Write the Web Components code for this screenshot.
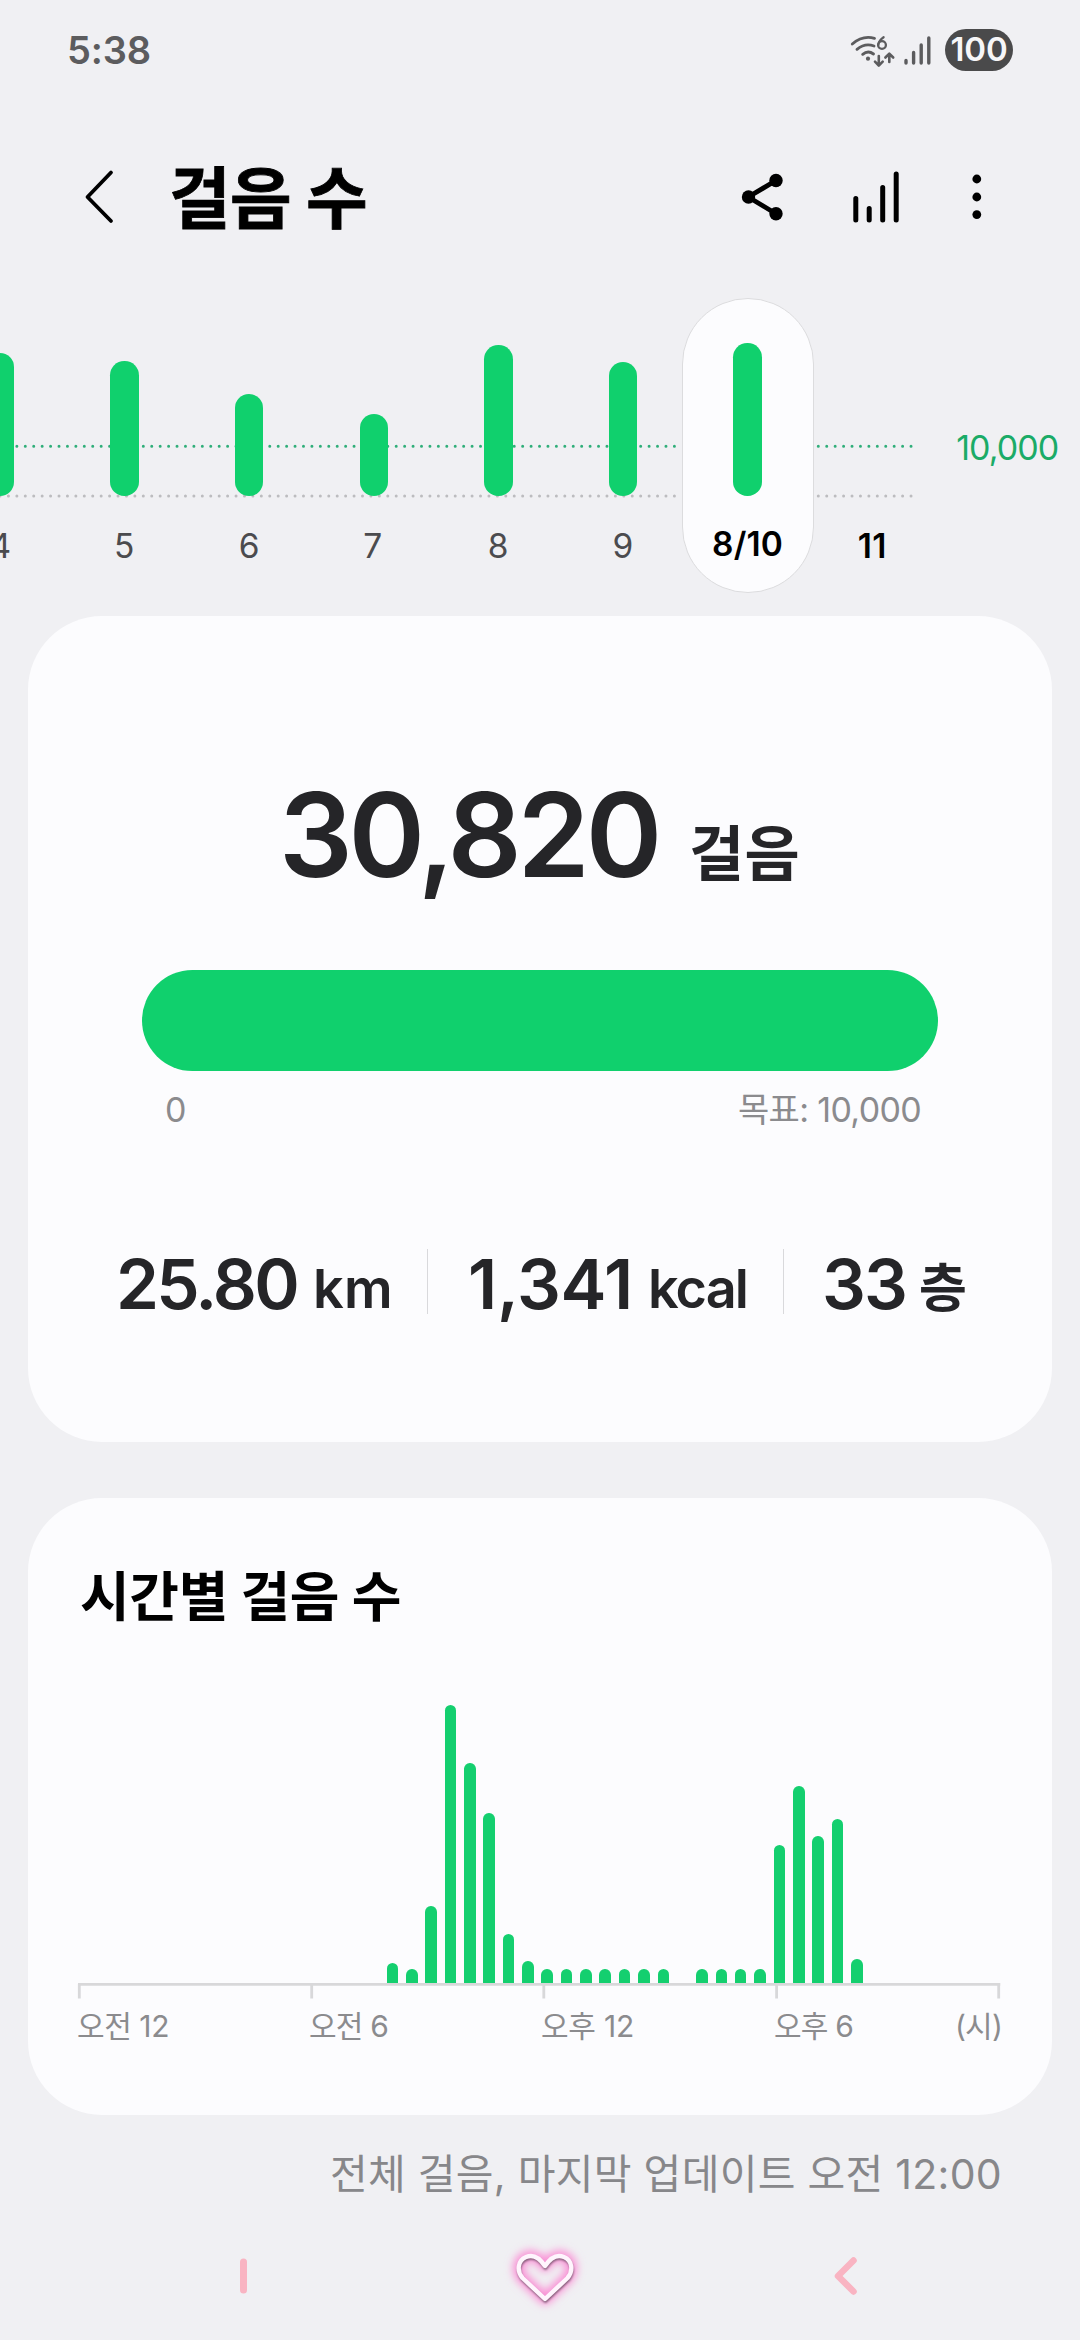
<!DOCTYPE html>
<html lang="ko">
<head>
<meta charset="utf-8">
<title>걸음 수</title>
<style>
html,body{margin:0;background:#f0f0f3}
body{width:1080px;height:2340px;overflow:hidden;font-family:Inter,"Noto Sans CJK KR",sans-serif}
</style>
</head>
<body>
<steps-app></steps-app>
<script>
const define = (name, html, setup) => customElements.define(name, class extends HTMLElement {
  connectedCallback() {
    if (this.shadowRoot) return;
    const root = this.attachShadow({ mode: 'open' });
    root.innerHTML = html;
    if (setup) setup(this, root);
  }
});

/* A line of text whose letter spacing is adjusted until it fills the width in "w". */
define('fit-text', `<style>
:host{display:block;flex:none;white-space:pre}
span{display:inline-block;white-space:pre}
</style><span><slot></slot></span>`, (el, root) => {
  const span = root.querySelector('span');
  const w = +el.getAttribute('w'), size = +el.getAttribute('size');
  el.style.fontSize = size + 'px';
  el.style.lineHeight = (el.getAttribute('h') || Math.round(size * 1.3)) + 'px';
  el.style.fontWeight = el.getAttribute('weight') || 400;
  el.style.width = w + 'px';
  const n = [...el.textContent].length;
  const natural = span.getBoundingClientRect().width;
  span.style.letterSpacing = ((w - natural) / n) + 'px';
});

define('status-bar', `<style>
:host{display:flex;flex:none;height:100px;box-sizing:border-box;padding:29px 67px 0 67px;color:#5c5c5e;align-items:flex-start}
.grow{flex:1}
svg{display:block;flex:none}
.pill{display:flex;justify-content:center;width:68px;height:42px;border-radius:21px;background:#4a4a4b;color:#f6f6f8;margin-left:12px}
</style>
<fit-text size="38" w="84" h="42" weight="600">5:38</fit-text>
<div class="grow"></div>
<svg width="84" height="42" viewBox="849 29 84 42" fill="none" stroke="#5c5c5e" stroke-linecap="round">
<g stroke-width="2.9"><path d="M852.3 44Q862.5 35 874.5 38.3M857 49.3Q865 42.7 874 46M862.7 54.3Q868 50 873.5 54"/></g>
<circle cx="868" cy="58.7" r="2.1" fill="#5c5c5e" stroke="none"/>
<g stroke-width="2.3"><circle cx="882" cy="45" r="3.9"/><path d="M883.6 37.2Q878.7 40.6 878.2 45"/></g>
<g stroke-width="2.6" stroke-linejoin="round"><path d="M878.8 56V65M875 61.7L878.8 65.6L882.7 61.7M889.3 62V54M885.4 57.5L889.3 53.6L893.2 57.5"/></g>
<g stroke-width="3.4"><path d="M906 60.5V63M913.6 52.5V63M921.2 45V63M928.8 38V63"/></g>
</svg>
<div class="pill"><fit-text size="33" w="57" h="41" weight="600">100</fit-text></div>`);

define('app-header', `<style>
:host{display:flex;flex:none;height:194px;align-items:flex-start;color:#000}
svg{display:block;flex:none}
.back{margin:63px 0 0 77px}
fit-text{margin:60px 0 0 48px;-webkit-text-stroke:0.8px #000}
.acts{margin:63px 0 0 367px}
</style>
<svg class="back" width="44" height="68" viewBox="77 163 44 68" fill="none" stroke="#000" stroke-width="3.8" stroke-linecap="round" stroke-linejoin="round"><path d="M111 172.5L87.5 197L111 221"/></svg>
<fit-text size="67" w="198" h="78" weight="700">걸음 수</fit-text>
<svg class="acts" width="256" height="68" viewBox="734 163 256 68">
<path d="M776 180.5L748.3 197L776 213.7" fill="none" stroke="#000" stroke-width="4.8"/>
<circle cx="748.5" cy="197" r="6.7"/><circle cx="776" cy="180.5" r="6.7"/><circle cx="776" cy="213.7" r="6.7"/>
<path d="M855.8 198.5V220M869.2 208.5V220M882.7 187.5V220M896.2 174V220" stroke="#000" stroke-width="5" stroke-linecap="round"/>
<circle cx="976.8" cy="179" r="4.4"/><circle cx="976.8" cy="197" r="4.4"/><circle cx="976.8" cy="214.6" r="4.4"/>
</svg>`);

define('day-column', `<style>
:host{display:flex;flex:none;flex-direction:column;align-items:center;width:124.6px;height:322px;position:relative;color:#4b4b4e}
.pill{display:flex;flex-direction:column;align-items:center}
.plot{height:202px;display:flex;align-items:flex-end}
.bar{width:28.4px;border-radius:14.2px;background:#10d06d}
fit-text{margin-top:28px}
:host([selected]),:host([strong]){color:#000}
:host([selected]) .pill{box-sizing:border-box;width:132px;height:295px;margin-top:4px;border:1px solid #dcdcde;border-radius:66px;background:#fcfcfe}
:host([selected]) .plot{height:197px}
:host([selected]) fit-text{margin-top:26px}
</style><div class="pill"><div class="plot"><div class="bar"></div></div></div>`, (el, root) => {
  root.querySelector('.bar').style.height = el.getAttribute('value') + 'px';
  const strong = el.hasAttribute('selected') || el.hasAttribute('strong');
  const label = document.createElement('fit-text');
  label.textContent = el.getAttribute('label');
  label.setAttribute('size', 33.5);
  label.setAttribute('w', el.getAttribute('lw') || 21);
  label.setAttribute('h', 44);
  label.setAttribute('weight', strong ? 600 : 400);
  root.querySelector('.pill').append(label);
});

define('week-chart', `<style>
:host{display:flex;flex:none;height:322px;position:relative;overflow:hidden}
.days{display:flex;width:934px;flex:none;margin-left:-62.3px;position:relative}
svg{position:absolute;left:0;top:0}
.goal{color:#1aab67;margin:132px 0 0 84.5px;position:relative}
</style>
<svg width="1080" height="322" fill="none" stroke-width="3" stroke-linecap="round" stroke-dasharray="0 8.43">
<path d="M0 152.3H676M818.3 152.3H913" stroke="#2fae79"/><path d="M0 202H676M818.3 202H913" stroke="#bcbcbf"/></svg>
<div class="days">
<day-column label="4" value="143.5"></day-column><day-column label="5" value="135"></day-column>
<day-column label="6" value="102"></day-column><day-column label="7" value="82"></day-column>
<day-column label="8" value="151"></day-column><day-column label="9" value="134"></day-column>
<day-column label="8/10" lw="71" value="153" selected></day-column><day-column label="11" lw="29" value="0" strong></day-column>
</div>
<fit-text class="goal" size="34" w="102" h="44">10,000</fit-text>`);

define('stat-value', `<style>
:host{display:flex;flex:none;align-items:flex-start}
</style><slot></slot>`);

define('summary-card', `<style>
:host{display:block;flex:none;box-sizing:border-box;width:1024px;height:826px;margin:0 28px;border-radius:74px;background:#fcfcfe;color:#252528;padding-top:149px}
.total{display:flex;height:205px;padding-left:251px}
.total .u{margin:49px 0 0 31px}
.bar{width:796px;height:101px;border-radius:50.5px;background:#10d06d;margin-left:114px}
.range{display:flex;justify-content:space-between;margin:17px 131px 0 137px;color:#8b8b8e}
.stats{display:flex;height:70px;margin-top:116px;padding-left:88px}
.line{width:1px;height:65px;background:#d9d9dc;margin-top:1px}
</style>
<div class="total"><fit-text size="116" w="379" h="140" weight="600">30,820</fit-text><fit-text class="u" size="60" w="111" h="80" weight="700">걸음</fit-text></div>
<div class="bar"></div>
<div class="range"><fit-text size="34" w="21" h="44">0</fit-text><fit-text size="34" w="183" h="44">목표: 10,000</fit-text></div>
<div class="stats">
<stat-value><fit-text size="69" w="181" h="72" weight="600">25.80</fit-text><fit-text style="margin:6px 0 0 16px" size="54" w="80" h="70" weight="600">km</fit-text></stat-value>
<div class="line" style="margin-left:34px"></div>
<stat-value style="margin-left:40px"><fit-text size="69" w="165" h="72" weight="600">1,341</fit-text><fit-text style="margin:6px 0 0 15px" size="54" w="99" h="70" weight="600">kcal</fit-text></stat-value>
<div class="line" style="margin-left:36px"></div>
<stat-value style="margin-left:38px"><fit-text size="69" w="84" h="72" weight="600">33</fit-text><fit-text style="margin:6px 0 0 13px" size="52" w="48" h="70" weight="700">층</fit-text></stat-value>
</div>`);

define('hour-chart', `<style>
:host{display:block;width:930px}
.plot{display:flex;height:300px;align-items:flex-end;margin-left:-3.7px}
i{display:block;width:11.6px;margin:0 3.89px;flex:none}
i.on{border-radius:5.8px 5.8px 0 0;background:#14cf6f}
svg{display:block}
.labels{display:flex;color:#8b8b8e;margin-top:5px}
</style>
<div class="plot"></div>
<svg width="930" height="16"><path d="M1 1.3H923.3M2.3 1V15.5M234.7 1V15.5M466.8 1V15.5M699.6 1V15.5M921.7 1V15.5" fill="none" stroke="#d8d8da" stroke-width="2.8"/></svg>
<div class="labels"><fit-text size="30" w="92" h="44">오전 12</fit-text><fit-text style="margin-left:140px" size="30" w="79" h="44">오전 6</fit-text><fit-text style="margin-left:153px" size="30" w="93" h="44">오후 12</fit-text><fit-text style="margin-left:140px" size="30" w="79" h="44">오후 6</fit-text><fit-text style="margin-left:102px" size="30" w="47" h="44">(시)</fit-text></div>`, (el, root) => {
  const values = JSON.parse(el.getAttribute('values'));
  const plot = root.querySelector('.plot');
  for (let slot = 0; slot < 41; slot++) {
    const bar = document.createElement('i');
    if (values[slot]) { bar.className = 'on'; bar.style.height = values[slot] + 'px'; }
    plot.append(bar);
  }
});

define('hourly-card', `<style>
:host{display:block;flex:none;box-sizing:border-box;width:1024px;height:617px;margin:56px 28px 0;border-radius:74px;background:#fcfcfe;color:#000;padding:60px 0 0 52px}
hour-chart{margin:45px 0 0 -3px}
</style>
<fit-text size="54" w="321" h="80" weight="700">시간별 걸음 수</fit-text>
<hour-chart values='{"16":20,"17":14,"18":77,"19":277.6,"20":220.5,"21":170,"22":49.5,"23":22,"24":14,"25":14,"26":14,"27":14,"28":14,"29":14,"30":14,"32":14,"33":14,"34":14,"35":14,"36":138,"37":197,"38":147.5,"39":164,"40":24}'></hour-chart>`);

define('nav-bar', `<style>
:host{display:flex;flex:none;height:134px;align-items:center;padding-left:233px}
svg{display:block}
</style>
<svg width="640" height="110" viewBox="233 2218 640 110" fill="none" stroke-linecap="round" stroke-linejoin="round">
<defs><filter id="g" x="-60%" y="-60%" width="220%" height="220%"><feGaussianBlur stdDeviation="4"/></filter><filter id="s" x="-20%" y="-20%" width="140%" height="140%"><feGaussianBlur stdDeviation="0.9"/></filter>
<path id="h" d="M545 2266C539 2257 532 2254.5 526 2257C517.5 2260.5 516.5 2271 522.5 2278L545 2299L567.5 2278C573.5 2271 572.5 2260.5 564 2257C558 2254.5 551 2257 545 2266Z"/></defs>
<path d="M243.5 2262V2290" stroke="#f9b4c2" stroke-width="7"/>
<use href="#h" stroke="#fb8bd4" stroke-width="11" filter="url(#g)"/>
<use href="#h" x="0.5" y="2" stroke="#7d5a73" stroke-width="3.6" filter="url(#s)"/>
<use href="#h" stroke="#fff5fd" stroke-width="4.4"/>
<path d="M853.5 2260.5L838 2276L853.5 2291.5" stroke="#f9b4c2" stroke-width="6.5"/>
</svg>`);

define('steps-app', `<style>
:host{display:flex;flex-direction:column;width:1080px;height:2340px;overflow:hidden;background:#f0f0f3}
.update{flex:none;color:#87878a;display:flex;justify-content:flex-end;height:91px;box-sizing:border-box;padding:31px 78px 0 0}
</style>
<status-bar></status-bar>
<app-header></app-header>
<week-chart></week-chart>
<summary-card></summary-card>
<hourly-card></hourly-card>
<div class="update"><fit-text size="41" w="672" h="56">전체 걸음, 마지막 업데이트 오전 12:00</fit-text></div>
<nav-bar></nav-bar>`);
</script>
</body>
</html>
